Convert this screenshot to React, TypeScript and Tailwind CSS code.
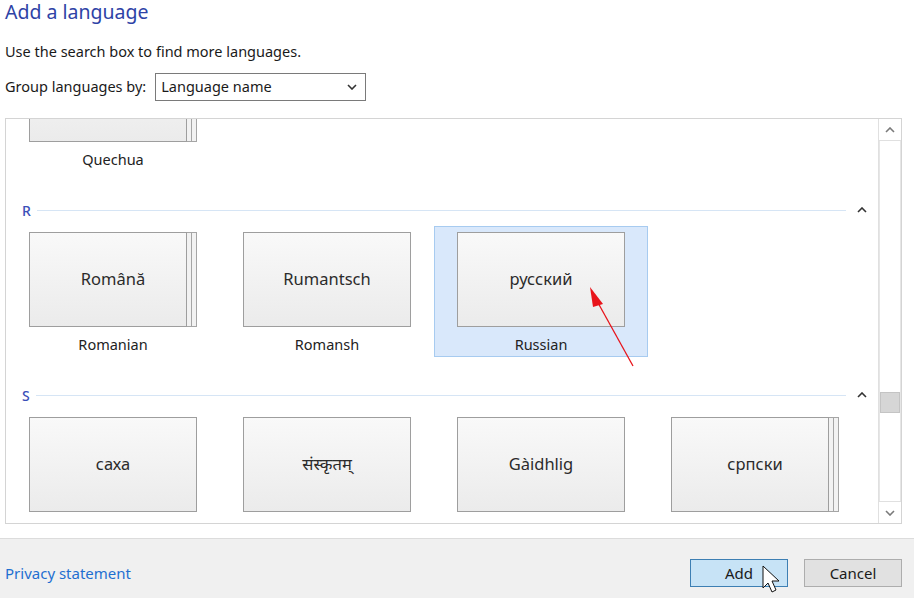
import React from 'react';

interface Lang {
  native: string;
  name: string;
  stacked?: boolean;
  selected?: boolean;
}

interface Group {
  letter: string;
  items: Lang[];
}

// list is scrolled: only the bottom of the Q row is visible
const quechua: Lang = { native: '', name: 'Quechua', stacked: true };

const groups: Group[] = [
  {
    letter: 'R',
    items: [
      { native: 'Română', name: 'Romanian', stacked: true },
      { native: 'Rumantsch', name: 'Romansh' },
      { native: 'русский', name: 'Russian', selected: true },
    ],
  },
  {
    letter: 'S',
    items: [
      { native: 'саха', name: 'Sakha' },
      { native: 'संस्कृतम्', name: 'Sanskrit' },
      { native: 'Gàidhlig', name: 'Scottish Gaelic' },
      { native: 'српски', name: 'Serbian', stacked: true },
    ],
  },
];

const Chevron = ({ up, className }: { up?: boolean; className?: string }) => (
  <svg width="10" height="6" viewBox="0 0 10 6" className={className}>
    <polyline
      points={up ? '1,5 5,1 9,5' : '1,1 5,5 9,1'}
      fill="none"
      stroke="currentColor"
      strokeWidth="1.6"
    />
  </svg>
);

const Tile: React.FC<{ lang: Lang }> = ({ lang }) => (
  <div
    className={`w-[214px] h-[131px] px-[22px] pt-[5px] border ${
      lang.selected ? 'bg-[#d9e8fb] border-[#a7cbf0]' : 'border-transparent'
    }`}
  >
    <div className="relative w-[168px] h-[95px]">
      {lang.stacked && (
        <>
          <div className="absolute left-0 top-0 w-[168px] h-[95px] border border-[#a5a5a5] bg-[#f2f2f2]" />
          <div className="absolute left-0 top-0 w-[163px] h-[95px] border border-[#a5a5a5] bg-[#f2f2f2]" />
        </>
      )}
      <div
        className={`relative h-[95px] ${lang.stacked ? 'w-[158px]' : 'w-[168px]'} border border-[#9e9e9e] bg-gradient-to-b from-[#f9f9f9] to-[#ebebeb] flex items-center justify-center text-[16.5px] text-[#2b2b2b]`}
      >
        {lang.native && <span className={lang.stacked ? 'pl-[10px]' : ''}>{lang.native}</span>}
      </div>
    </div>
    <div className="pt-[9px] leading-[16px] text-[14.5px] text-[#222] text-center w-[168px]">
      {lang.name}
    </div>
  </div>
);

export default function App() {
  return (
    <div
      className="relative w-[914px] h-[598px] bg-white flex flex-col overflow-hidden"
      style={{ fontFamily: '"Noto Sans", "Open Sans", sans-serif' }}
    >
      <div className="px-[5px]">
        <h1 className="text-[19.5px] leading-[24px] text-[#2e43a6]">Add a language</h1>
        <p className="mt-[19px] text-[14.5px] leading-[17px] text-[#1a1a1a]">
          Use the search box to find more languages.
        </p>
        <div className="mt-[13px] h-[28px] flex items-center gap-[9px] text-[14.5px] text-[#1a1a1a]">
          <span>Group languages by:</span>
          <div className="w-[211px] h-[28px] border border-[#7a7a7a] flex items-center justify-between pl-[5px] pr-[8px]">
            <span>Language name</span>
            <Chevron className="text-[#333]" />
          </div>
        </div>
      </div>

      <div className="mt-[17px] ml-[5px] w-[897px] h-[406px] border border-[#d4d4d4] flex">
        <div className="flex-1 overflow-hidden">
          <div className="-mt-[78px] flex flex-col gap-[28px]">
            <div className="grid grid-cols-[repeat(4,214px)]">
              <Tile lang={quechua} />
            </div>
            {groups.map((g) => (
              <div key={g.letter}>
                <div className="h-[20px] flex items-center pl-[16px]">
                  <span className="text-[14px] text-[#3b4fb8] font-medium">{g.letter}</span>
                  <div className="flex-1 h-px bg-[#d6e5f5] ml-[6px]" />
                  <div className="w-[32px] flex justify-center text-[#333]">
                    <Chevron up />
                  </div>
                </div>
                <div className="mt-[6px] grid grid-cols-[repeat(4,214px)]">
                  {g.items.map((l) => (
                    <Tile key={l.name} lang={l} />
                  ))}
                </div>
              </div>
            ))}
          </div>
        </div>
        <div className="w-[23px] border-l border-[#e0e0e0] flex flex-col bg-white">
          <div className="h-[22px] border-b border-[#e0e0e0] flex items-center justify-center text-[#7a7a7a]">
            <Chevron up />
          </div>
          <div className="flex-1 border-x border-[#e6e6e6]">
            <div className="mt-[251px] h-[21px] bg-[#d6d6d6] border border-[#c4c4c4]" />
          </div>
          <div className="h-[22px] border-t border-[#e0e0e0] flex items-center justify-center text-[#7a7a7a]">
            <Chevron />
          </div>
        </div>
      </div>

      <div className="mt-[14px] flex-1 bg-[#f0f0f0] border-t border-[#dcdcdc] flex items-center pt-[9px] px-[5px]">
        <span className="text-[15px] text-[#1f6fd0]">Privacy statement</span>
        <div className="ml-auto flex gap-[16px] pr-[7px]">
          <button className="w-[98px] h-[28px] bg-[#c7e3f6] border border-[#3d7fb3] text-[15px] text-[#1a1a1a]">
            Add
          </button>
          <button className="w-[98px] h-[28px] bg-[#e1e1e1] border border-[#adadad] text-[15px] text-[#1a1a1a]">
            Cancel
          </button>
        </div>
      </div>

      <svg className="absolute left-0 top-0 pointer-events-none" width="914" height="598">
        <line x1="633" y1="366" x2="597" y2="301" stroke="#e8141b" strokeWidth="1.3" />
        <polygon points="590,287 603,304 593,307" fill="#e8141b" />
        <path
          d="M763 566 L763 588 L768 583 L772 592 L776 590 L772 581 L779 581 Z"
          fill="#fff"
          stroke="#111"
          strokeWidth="1"
          strokeLinejoin="round"
        />
      </svg>
    </div>
  );
}
